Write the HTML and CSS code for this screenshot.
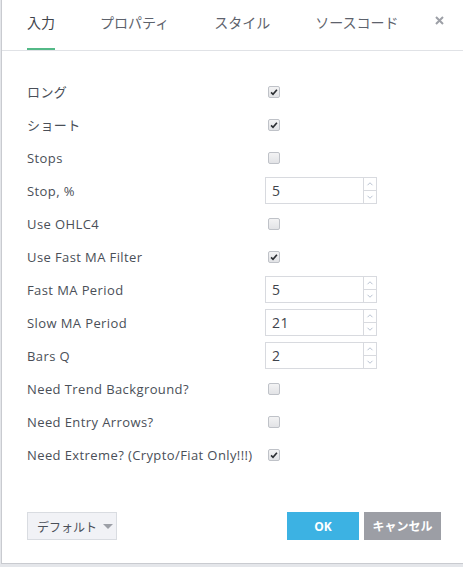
FILE: index.html
```html
<!DOCTYPE html>
<html lang="ja">
<head>
<meta charset="utf-8">
<link rel="stylesheet" href="styles.css">
</head>
<body>
<div class="dialog">
  <div class="header">
    <div class="tabs">
      <div class="tab active">入力</div>
      <div class="tab">プロパティ</div>
      <div class="tab">スタイル</div>
      <div class="tab">ソースコード</div>
    </div>
    <div class="close"><svg viewBox="0 0 9 9"><path d="M1 1 L8 8 M8 1 L1 8"/></svg></div>
  </div>
  <div class="content">
    <div class="row"><div class="label">ロング</div><div class="value"><span class="cb checked"><svg viewBox="0 0 12 12"><path d="M2.5 6.5 L4.8 8.8 L9.5 3.2" /></svg></span></div></div>
    <div class="row"><div class="label">ショート</div><div class="value"><span class="cb checked"><svg viewBox="0 0 12 12"><path d="M2.5 6.5 L4.8 8.8 L9.5 3.2" /></svg></span></div></div>
    <div class="row"><div class="label">Stops</div><div class="value"><span class="cb"></span></div></div>
    <div class="row"><div class="label">Stop, %</div><div class="value"><div class="num"><span class="numval">5</span><div class="spin"><span class="up"><svg viewBox="0 0 12 12"><path d="M3 7.5 L6 4.5 L9 7.5"/></svg></span><span class="down"><svg viewBox="0 0 12 12"><path d="M3 4.5 L6 7.5 L9 4.5"/></svg></span></div></div></div></div>
    <div class="row"><div class="label">Use OHLC4</div><div class="value"><span class="cb"></span></div></div>
    <div class="row"><div class="label">Use Fast MA Filter</div><div class="value"><span class="cb checked"><svg viewBox="0 0 12 12"><path d="M2.5 6.5 L4.8 8.8 L9.5 3.2" /></svg></span></div></div>
    <div class="row"><div class="label">Fast MA Period</div><div class="value"><div class="num"><span class="numval">5</span><div class="spin"><span class="up"><svg viewBox="0 0 12 12"><path d="M3 7.5 L6 4.5 L9 7.5"/></svg></span><span class="down"><svg viewBox="0 0 12 12"><path d="M3 4.5 L6 7.5 L9 4.5"/></svg></span></div></div></div></div>
    <div class="row"><div class="label">Slow MA Period</div><div class="value"><div class="num"><span class="numval">21</span><div class="spin"><span class="up"><svg viewBox="0 0 12 12"><path d="M3 7.5 L6 4.5 L9 7.5"/></svg></span><span class="down"><svg viewBox="0 0 12 12"><path d="M3 4.5 L6 7.5 L9 4.5"/></svg></span></div></div></div></div>
    <div class="row"><div class="label">Bars Q</div><div class="value"><div class="num"><span class="numval">2</span><div class="spin"><span class="up"><svg viewBox="0 0 12 12"><path d="M3 7.5 L6 4.5 L9 7.5"/></svg></span><span class="down"><svg viewBox="0 0 12 12"><path d="M3 4.5 L6 7.5 L9 4.5"/></svg></span></div></div></div></div>
    <div class="row"><div class="label">Need Trend Background?</div><div class="value"><span class="cb"></span></div></div>
    <div class="row"><div class="label">Need Entry Arrows?</div><div class="value"><span class="cb"></span></div></div>
    <div class="row"><div class="label">Need Extreme? (Crypto/Fiat Only!!!)</div><div class="value"><span class="cb checked"><svg viewBox="0 0 12 12"><path d="M2.5 6.5 L4.8 8.8 L9.5 3.2" /></svg></span></div></div>
  </div>
  <div class="footer">
    <div class="defaults">デフォルト <span class="caret"></span></div>
    <div class="actions">
      <div class="btn ok">OK</div>
      <div class="btn cancel">キャンセル</div>
    </div>
  </div>
</div>
</body>
</html>
```

FILE: styles.css
```css
html, body {
  margin: 0;
  padding: 0;
  background: #e4e6ea;
}
body {
  width: 463px;
  height: 567px;
  overflow: hidden;
  font-family: "Open Sans", "Noto Sans CJK JP", sans-serif;
  color: #4a4f58;
}
.dialog {
  margin-left: 1px;
  width: 462px;
  height: 564px;
  box-sizing: border-box;
  border-left: 1px solid #c9cbd0;
  border-bottom: 1px solid #c9cbd0;
  background: #fff;
  display: flex;
  flex-direction: column;
}
.header {
  height: 51px;
  box-sizing: border-box;
  border-bottom: 1px solid #e0e2e6;
  display: flex;
  justify-content: space-between;
  align-items: stretch;
}
.tabs {
  display: flex;
  gap: 45px;
  padding-left: 25px;
}
.tab {
  font-family: "Noto Sans CJK JP", sans-serif;
  font-size: 14px;
  color: #5d626c;
  display: flex;
  align-items: center;
  padding-bottom: 5px;
  box-sizing: border-box;
  border-bottom: 2px solid transparent;
}
.tab.active {
  color: #3f444c;
  border-bottom-color: #53b987;
}
.close {
  padding: 16px 19px 0 0;
}
.close svg {
  width: 9px;
  height: 9px;
  display: block;
  fill: none;
  stroke: #9da0a7;
  stroke-width: 2;
}
.content {
  padding: 24px 0 0 25px;
}
.row {
  height: 33px;
  display: flex;
  align-items: center;
  font-size: 13px;
  letter-spacing: 0.4px;
}
.label {
  width: 238px;
  white-space: nowrap;
}
.value {
  display: flex;
  align-items: center;
}
.cb {
  margin-left: 3px;
  width: 12px;
  height: 12px;
  box-sizing: border-box;
  border: 1px solid #bfc2c8;
  border-radius: 2px;
  background: linear-gradient(#f3f3f4, #e2e3e6);
  display: flex;
}
.cb svg {
  width: 10px;
  height: 10px;
  fill: none;
  stroke: #2c2f33;
  stroke-width: 2;
}
.num {
  width: 112px;
  height: 27px;
  box-sizing: border-box;
  border: 1px solid #d8dadf;
  display: flex;
}
.numval {
  flex: 1;
  padding-left: 6px;
  display: flex;
  align-items: center;
  font-size: 14px;
  color: #3f444c;
}
.spin {
  width: 12px;
  border-left: 1px solid #d8dadf;
  display: flex;
  flex-direction: column;
}
.spin span {
  flex: 1;
  display: flex;
  align-items: center;
  justify-content: center;
}
.spin .up {
  border-bottom: 1px solid #d8dadf;
}
.spin svg {
  width: 10px;
  height: 10px;
  fill: none;
  stroke: #aab6c8;
  stroke-width: 1;
}
.footer {
  margin-top: auto;
  padding: 0 22px 23px 25px;
  display: flex;
  justify-content: space-between;
  align-items: center;
}
.defaults {
  width: 90px;
  height: 28px;
  box-sizing: border-box;
  border: 1px solid #d9dce1;
  background: #f1f2f6;
  font-family: "Noto Sans CJK JP", sans-serif;
  font-size: 12px;
  color: #4a4f58;
  display: flex;
  align-items: center;
  padding-left: 9px;
  gap: 6px;
}
.caret {
  width: 0;
  height: 0;
  border-left: 5px solid transparent;
  border-right: 5px solid transparent;
  border-top: 5px solid #9da0a7;
}
.actions {
  display: flex;
  gap: 5px;
}
.btn {
  height: 28px;
  display: flex;
  align-items: center;
  justify-content: center;
  color: #fff;
  font-weight: bold;
  font-size: 12px;
  font-family: "Open Sans", "Noto Sans CJK JP", sans-serif;
}
.ok {
  width: 72px;
  background: #3cb2e3;
}
.cancel {
  width: 77px;
  background: #9c9ea5;
}
```
